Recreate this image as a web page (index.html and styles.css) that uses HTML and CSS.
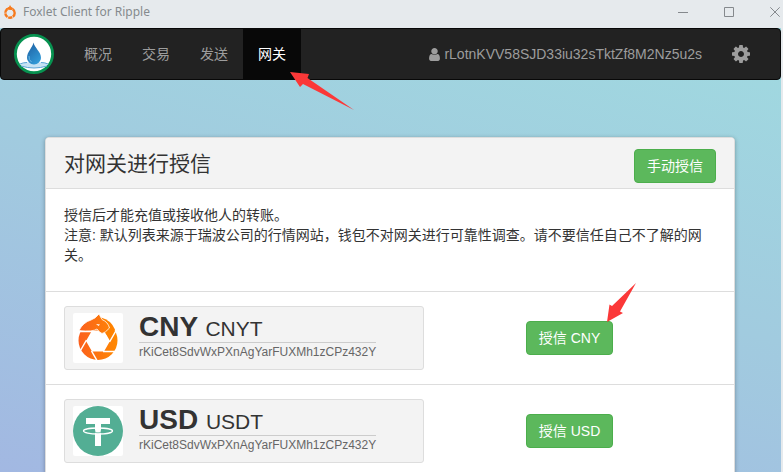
FILE: index.html
```html
<!DOCTYPE html>
<html lang="zh-CN">
<head>
<meta charset="utf-8">
<meta name="viewport" content="width=device-width, initial-scale=1">
<title>Foxlet Client for Ripple</title>
<link rel="stylesheet" href="styles.css">
</head>
<body>
<svg class="defs" aria-hidden="true">
  <defs>
    <linearGradient id="fox-fill" gradientUnits="userSpaceOnUse" x1="5" y1="0" x2="45" y2="0">
      <stop offset="0" stop-color="#fb5f1e"/>
      <stop offset="1" stop-color="#ff8a00"/>
    </linearGradient>
    <linearGradient id="drop-fill" x1="0" y1="0" x2="0.6" y2="1">
      <stop offset="0" stop-color="#1d5da0"/>
      <stop offset="1" stop-color="#3199d6"/>
    </linearGradient>
  </defs>
</svg>

<header class="titlebar">
  <svg class="app-icon" viewBox="0 0 14 14" aria-hidden="true">
    <circle cx="7" cy="8" r="4.700" fill="none" stroke="#f77a1c" stroke-width="2.400" stroke-dasharray="4.200 .7"/>
    <path d="M2.500 4 6 2 7 0 8.500 2.500 11 4 8 5z" fill="#f77a1c"/>
  </svg>
  <span class="app-title">Foxlet Client for Ripple</span>
  <div class="window-controls">
    <button type="button" aria-label="最小化"><svg viewBox="0 0 10 10"><path d="M0 5.500H10"/></svg></button>
    <button type="button" aria-label="最大化"><svg viewBox="0 0 10 10"><path d="M.5 .5H9.500V9.500H.5Z"/></svg></button>
    <button type="button" aria-label="关闭"><svg viewBox="0 0 10 10"><path d="M.3 .3 9.700 9.700M9.700 .3 .3 9.700"/></svg></button>
  </div>
</header>

<div class="page">
  <nav class="navbar">
    <a class="brand" href="#" aria-label="首页">
      <svg viewBox="0 0 40 40" aria-hidden="true">
        <circle cx="20" cy="20" r="18.600" fill="#fff" stroke="#079250" stroke-width="2.800"/>
        <path d="M5.500 30.500Q12 27.500 16 28.500Q20 31 25 28.500Q30 27.500 34.500 30.500Q28 34 20 34T5.500 30.500Z" fill="#c6e2f3"/>
        <path d="M6 30Q9 28.500 13 28.500M27 28.500Q31 28.500 34 30M7 32Q20 36 33 32" fill="none" stroke="#5ba5d6" stroke-width="1"/>
        <path d="M19.500 8.500C20.500 14 27 17.500 27 24A7 6.500 0 0 1 13 24C13 17.500 18.500 14 19.500 8.500Z" fill="url(#drop-fill)"/>
        <path d="M15 22Q14.500 26 17.500 28" fill="none" stroke="#6ab8e4" stroke-width="1"/>
      </svg>
    </a>
    <ul class="nav-list">
      <li><a href="#">概况</a></li>
      <li><a href="#">交易</a></li>
      <li><a href="#">发送</a></li>
      <li class="active">
        <a href="#" aria-current="page">网关</a>
        <svg class="pointer pointer-nav" viewBox="0 0 64 39" aria-hidden="true"><path d="M0 0 19 2 17.500 6 64 38 13 12 10 15Z"/></svg>
      </li>
    </ul>
    <a class="account" href="#">
      <svg viewBox="256 128 1280 1536" aria-hidden="true"><path d="M1536 1399q0 109-62.500 187t-150.500 78h-854q-88 0-150.500-78t-62.500-187q0-85 8.500-160.500t31.500-152 58.500-131 94-89 134.500-34.500q131 128 313 128t313-128q76 0 134.500 34.500t94 89 58.500 131 31.500 152 8.500 160.500zm-256-887q0 159-112.500 271.500t-271.500 112.500-271.500-112.500-112.500-271.500 112.500-271.500 271.500-112.500 271.500 112.500 112.500 271.500z"/></svg>
      <span>rLotnKVV58SJD33iu32sTktZf8M2Nz5u2s</span>
    </a>
    <button class="settings" type="button" aria-label="设置">
      <svg viewBox="128 128 1536 1536" aria-hidden="true"><path d="M1152 896q0-106-75-181t-181-75-181 75-75 181 75 181 181 75 181-75 75-181zm512-109v222q0 12-8 23t-20 13l-185 28q-19 54-39 91 35 50 107 138 10 12 10 25t-9 23q-27 37-99 108t-94 71q-12 0-26-9l-138-108q-44 23-91 38-16 136-29 186-7 28-36 28h-222q-14 0-24.500-8.500t-11.500-21.500l-28-184q-49-16-90-37l-141 107q-10 9-25 9-14 0-25-11-126-114-165-168-7-10-7-23 0-12 8-23 15-21 51-66.500t54-70.500q-27-50-41-99l-183-27q-13-2-21-12.500t-8-23.500v-222q0-12 8-23t19-13l186-28q14-46 39-92-40-57-107-138-10-12-10-24 0-10 9-23 26-36 98.500-107.500t94.500-71.500q13 0 26 10l138 107q44-23 91-38 16-136 29-186 7-28 36-28h222q14 0 24.500 8.500t11.500 21.500l28 184q49 16 90 37l142-107q9-9 24-9 13 0 25 10 129 119 165 170 7 8 7 22 0 12-8 23-15 21-51 66.500t-54 70.500q26 50 41 98l183 28q13 2 21 12.500t8 23.500z"/></svg>
    </button>
  </nav>

  <main class="panel">
    <div class="panel-heading">
      <h1>对网关进行授信</h1>
      <button class="btn" type="button">手动授信</button>
    </div>
    <div class="notice">
      <p>授信后才能充值或接收他人的转账。</p>
      <p>注意: 默认列表来源于瑞波公司的行情网站，钱包不对网关进行可靠性调查。请不要信任自己不了解的网关。</p>
    </div>

    <section class="gateway">
      <div class="card">
        <svg class="logo" viewBox="0 0 50 50" aria-hidden="true">
          <rect width="50" height="50" rx="2" fill="#fff"/>
          <path fill="url(#fox-fill)" fill-rule="evenodd" d="M25 8A19.500 19.500 0 0 1 25 47A19.500 19.500 0 0 1 25 8ZM13 28 19 38.400H31L37 28 31 17.600H19Z"/>
          <path fill="none" stroke="#fff" stroke-width="1.500" d="M13.500 27 4 43.500M18.500 38 28 54.500M30 38.400H49M36.500 29 46 12.500M4 18.500H20"/>
          <path fill="#ff8200" d="M28 4.500Q38 7 42 16.500L36.500 25.500 31 18Z"/>
          <path fill="url(#fox-fill)" stroke="#fff" stroke-width=".8" d="M6 17.500Q10 9.500 18 7Q22.500 5.500 26 1L29 6.500Q35 9 36.500 15Q32 20 29 20.500Q26 19 24 16Q20 19 6 17.500Z"/>
          <path fill="#fff" d="M23 11 27 11.500 25.500 13Z"/>
        </svg>
        <div class="card-text">
          <h2>CNY <small>CNYT</small></h2>
          <p>rKiCet8SdvWxPXnAgYarFUXMh1zCPz432Y</p>
        </div>
      </div>
      <div class="action">
        <button class="btn" type="button">授信 CNY</button>
        <svg class="pointer pointer-action" viewBox="0 0 29 39" aria-hidden="true"><path d="M0 39 2.500 21.500 5 23 29 0 13 28.500 16 30Z"/></svg>
      </div>
    </section>

    <section class="gateway">
      <div class="card">
        <svg class="logo" viewBox="0 0 50 50" aria-hidden="true">
          <rect width="50" height="50" rx="2" fill="#fff"/>
          <circle cx="25" cy="25" r="25" fill="#53ae94"/>
          <path fill="#fff" d="M13 12H37V18H28V40H22V18H13Z"/>
          <ellipse cx="25" cy="25" rx="14.500" ry="3" fill="none" stroke="#fff" stroke-width="1.300"/>
          <path d="M22 24.500V26.500Q25 27 28 26.500V24.500" fill="none" stroke="#53ae94" stroke-width=".7"/>
        </svg>
        <div class="card-text">
          <h2>USD <small>USDT</small></h2>
          <p>rKiCet8SdvWxPXnAgYarFUXMh1zCPz432Y</p>
        </div>
      </div>
      <div class="action">
        <button class="btn" type="button">授信 USD</button>
      </div>
    </section>
  </main>
</div>
</body>
</html>
```

FILE: styles.css
```css
* {
  box-sizing: border-box;
}

html {
  scrollbar-width: none;
}

body {
  margin: 0;
  height: 100vh;
  display: flex;
  flex-direction: column;
  background: #e6eaed;
  color: #333;
  font: 14px/20px "Liberation Sans", "Noto Sans CJK SC", sans-serif;
}

h1,
h2,
p,
ul {
  margin: 0;
  padding: 0;
}

a {
  color: inherit;
  text-decoration: none;
}

button {
  font: inherit;
  cursor: pointer;
}

svg {
  display: block;
}

.defs {
  position: absolute;
  width: 0;
  height: 0;
}

/* Window title bar */
.titlebar {
  flex: none;
  display: flex;
  align-items: center;
  height: 28px;
  padding: 0 3px 4px;
  color: #858a8e;
  font-family: "Noto Sans", sans-serif;
  font-size: 12px;
}

.app-icon {
  width: 14px;
  height: 14px;
  margin-right: 6px;
}

.window-controls {
  display: flex;
  gap: 36px;
  margin-left: auto;
}

.window-controls button {
  width: 10px;
  height: 10px;
  padding: 0;
  border: 0;
  background: none;
}

.window-controls svg {
  width: 10px;
  height: 10px;
  fill: none;
  stroke: #85898d;
}

/* Client area */
.page {
  flex: 1;
  min-height: 0;
  margin-right: 2px;
  overflow: auto;
  scrollbar-width: none;
  background: linear-gradient(195deg, #a0dae0, #a1cbdf 48%, #a2b8e2);
}

.navbar {
  display: flex;
  align-items: center;
  min-height: 52px;
  border: 1px solid #080808;
  border-radius: 4px;
  background: #222;
  color: #9d9d9d;
}

.brand {
  margin: 0 15px 0 13px;
}

.brand svg {
  width: 40px;
  height: 40px;
}

.nav-list {
  display: flex;
  list-style: none;
}

.nav-list li {
  position: relative;
}

.nav-list a {
  display: block;
  padding: 15px;
}

.nav-list .active a {
  background: #080808;
  color: #fff;
}

.account {
  display: flex;
  align-items: center;
  gap: 4px;
  margin-left: auto;
}

.account svg {
  width: 11px;
  height: 13px;
  fill: currentColor;
}

.settings {
  margin: 0 30px;
  padding: 0;
  border: 0;
  background: none;
  color: inherit;
}

.settings svg {
  width: 18px;
  height: 18px;
  fill: currentColor;
}

.pointer {
  position: absolute;
  z-index: 1;
  overflow: visible;
  fill: #fb3838;
  pointer-events: none;
}

.pointer-nav {
  top: 43px;
  left: 47px;
  width: 64px;
}

.pointer-action {
  right: -23px;
  bottom: 33px;
  width: 29px;
}

/* Gateway panel */
.panel {
  margin: 57px 46px 20px 45px;
  border: 1px solid #ddd;
  border-radius: 4px;
  background: #fff;
  box-shadow: 0 1px 4px rgba(0, 0, 0, 0.3);
}

.panel-heading {
  display: flex;
  align-items: flex-end;
  justify-content: space-between;
  padding: 7px 18px 5px;
  border-bottom: 1px solid #ddd;
  border-radius: 3px 3px 0 0;
  background: #f3f3f3;
}

h1 {
  font-size: 21px;
  font-weight: 400;
  line-height: 38px;
}

.btn {
  height: 34px;
  padding: 0 12px;
  border: 1px solid #4cae4c;
  border-radius: 4px;
  background: #5cb85c;
  color: #fff;
}

.notice {
  padding: 16px 18px 26px;
}

.gateway {
  display: grid;
  grid-template-columns: 17fr 7fr;
  align-items: center;
  padding: 14px 18px;
  border-top: 1px solid #ddd;
}

.card {
  display: flex;
  align-items: flex-start;
  gap: 16px;
  max-width: 360px;
  padding: 6px 8px;
  border: 1px solid #ddd;
  border-radius: 3px;
  background: #f3f3f3;
}

.logo {
  flex: none;
  width: 50px;
  height: 50px;
}

h2 {
  padding-bottom: 1px;
  border-bottom: 1px solid #ccc;
  font-size: 28px;
  line-height: 28px;
}

h2 small {
  font-size: 21px;
  font-weight: 400;
  line-height: 1;
}

.card-text p {
  color: #666;
  font-size: 12px;
  line-height: 18px;
}

.action {
  position: relative;
  justify-self: start;
}
```
